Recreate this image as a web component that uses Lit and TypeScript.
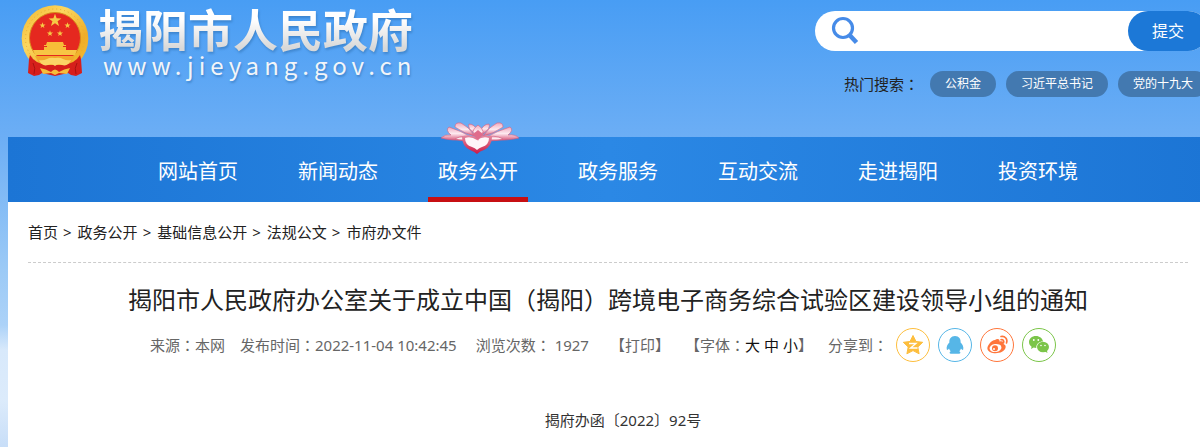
import { LitElement, html, css, svg } from "lit";
import { customElement } from "lit/decorators.js";

const STAR = "M0-10 2.4-3.2 9.5-3.1 3.8 1.2 5.9 8.1 0 4-5.9 8.1-3.8 1.2-9.5-3.1-2.4-3.2Z";

@customElement("site-emblem")
class SiteEmblem extends LitElement {
  static styles = css`
    :host { display: block; }
    svg { display: block; width: 68px; height: 72px; }
  `;
  render() {
    const star = (x: number, y: number, s: number) =>
      svg`<path d=${STAR} transform="translate(${x} ${y}) scale(${s})" fill="#f6c945"/>`;
    return html`<svg viewBox="0 0 68 72" role="img" aria-label="国徽">
      <defs><linearGradient id="gold" x1="0" y1="0" x2="1" y2="1">
        <stop offset="0" stop-color="#f3b52c"/><stop offset=".35" stop-color="#fbd760"/>
        <stop offset=".7" stop-color="#efad27"/><stop offset="1" stop-color="#f6c03c"/>
      </linearGradient></defs>
      <circle cx="34" cy="33.5" r="33.3" fill="url(#gold)"/>
      <circle cx="34" cy="33.5" r="29.5" fill="none" stroke="#e9ab30" stroke-width="1" stroke-dasharray="1 3"/>
      <circle cx="34" cy="33" r="25.5" fill="#e5281f" stroke="#d88d1c"/>
      ${star(34, 15.5, 0.68)}${star(21.5, 20.5, 0.32)}${star(46.5, 20.5, 0.32)}${star(29, 28.5, 0.32)}${star(39, 28.5, 0.32)}
      <path d="M26 37h16l1 3h2v1h-3v1h3v4H23v-4h3v-1h-3v-1h2Z" fill="#f7bd38"/>
      <path d="M12 45h44l-2 5H14Z" fill="#f7c544"/>
      <path d="M14 51h40l-4 7H18Z" fill="#f3a72c"/>
      <path d="M9 50q5 9 18 10h14q13-1 18-10l1 4 1 14-6 3-5-1-3-2-13 3-13-3-3 2-5 1-6-3 1-14Z" fill="#d61f1b"/>
      <path d="M18 55q4 1 8-1 3-2 8-1 5-1 8 1 4 2 8 1-3 7-9 5-4-2-7 1-3-3-7-1-6 2-9-5Z" fill="#fbd566"/>
      <path d="M19 63q6 1 11 4 4-5 8 0 5-3 11-4l-3 6-8-1-4 2-4-2-8 1Z" fill="#f6bd3a"/>
      <path d="M12 58q3 5 1 11M56 58q-3 5-1 11" fill="none" stroke="#a91210" stroke-width="1"/>
    </svg>`;
  }
}

@customElement("lotus-mark")
class LotusMark extends LitElement {
  static styles = css`
    :host { display: block; }
    svg { display: block; width: 78px; height: 32px; }
  `;
  render() {
    return html`<svg viewBox="0 0 78 32" aria-hidden="true">
      <defs>
        <linearGradient id="petal" x1="0" y1="0" x2="0" y2="1">
          <stop offset="0" stop-color="#f0a9bc"/><stop offset=".5" stop-color="#fdeaf0"/><stop offset="1" stop-color="#d9587b"/>
        </linearGradient>
        <linearGradient id="heart" x1="0" y1="0" x2="0" y2="1">
          <stop offset="0" stop-color="#e38aa2"/><stop offset="1" stop-color="#cc1844"/>
        </linearGradient>
      </defs>
      <g fill="url(#petal)" stroke="#d0607f" stroke-width=".6">
        <path d="M30 15Q20 9 8 5q-4 3 2 8Q4 12 0 16q10 3 28 2Z"/>
        <path d="M46 15Q56 9 69 5q4 3-2 8 7-1 11 3-12 3-29 2Z"/>
        <path d="M34 14Q24 12 14 5q0-5 6-4 8 4 13 12Z"/>
        <path d="M42 14q10-2 20-9 0-5-6-4-8 4-13 12Z"/>
        <path d="M34 12Q26 6 28 2q6 0 9 8ZM42 12q8-6 6-10-6 0-9 8Z"/>
        <path d="M37 3q-10 7 0 13 10-6 0-13Z"/>
        <path d="M14 17q8-5 21-1-8 5-21 1ZM62 17q-8-5-21-1 8 5 21 1Z"/>
      </g>
      <path d="M37 16q-10-5-16-1 0 9 8 13 5 2 7 4 3-3 7-4 8-4 8-13-6-4-14 1Z" fill="url(#heart)"/>
      <path d="M36 18q-6-4-12-2 0 7 7 9 3 1 5 3 2-2 5-3 7-2 7-9-6-2-12 2Z" fill="#fff5f8"/>
      <path d="M31 13q5 2 6 6 1-4 6-6l-6-5Z" fill="#e06c8b"/>
    </svg>`;
  }
}

const SHARES = [
  { name: "QQ空间", color: "#fdbe3d", art: svg`<path d="M17 7.500l3 6 6.700.8-4.900 4.700 1.300 6.800-6.100-3.200-6.100 3.200 1.300-6.800-4.900-4.700 6.700-.8Z" fill="#fdbe3d" stroke="#fdbe3d" stroke-linejoin="round"/><path d="M13 15.500h7l-5.500 4.500h7" fill="none" stroke="#fff" stroke-width="1.300"/>` },
  { name: "QQ", color: "#56b6e7", art: svg`<path d="M17 8c-4 0-6 3-5.600 6.500-2 2-3.300 4.500-2.600 7 .4 1 1.500 0 2.200-1 .3 1.200 1 2 1.700 2.700-1.600.6-1.500 2.600.3 2.600h8c1.800 0 1.900-2 .3-2.600.7-.7 1.400-1.500 1.700-2.700.7 1 1.800 2 2.200 1 .7-2.500-.6-5-2.600-7C23 11 21 8 17 8Z" fill="#56b6e7"/>` },
  { name: "新浪微博", color: "#ff763b", art: svg`<path d="M15 12c2-1.500 5-1.400 4.500 1.500 3-1 5 .2 4 2.500 4 1.500 2 6-1.500 7.800-5 2.600-13 1.700-14.500-2.500C6.500 18 11.500 12 15 12Z" fill="#ff763b"/><ellipse cx="15.500" cy="20" rx="6" ry="4" fill="#fff" transform="rotate(-8 15.500 20)"/><circle cx="15" cy="20.300" r="3" fill="#ff763b"/><circle cx="14" cy="21" r="1" fill="#fff"/><path d="M21 8.500c4-.8 7 2.500 5.500 6.500M21 11.700c2-.4 3.300 1 2.600 3" fill="none" stroke="#ff763b" stroke-width="1.600" stroke-linecap="round"/>` },
  { name: "微信", color: "#7bc549", art: svg`<path d="M14 8c-4.200 0-7 2.700-7 6 0 2 1 3.600 2.600 4.700L9 21l2.700-1.400c.8.200 1.600.4 2.600.4-.5-4 3-6.700 6.700-6.600C20.400 10.300 17.600 8 14 8Z" fill="#7bc549"/><ellipse cx="21" cy="19" rx="6" ry="5.200" fill="#7bc549"/><path d="M22 23l3.500 2-.8-3Z" fill="#7bc549"/><g fill="#fff"><circle cx="11.800" cy="12" r=".9"/><circle cx="16.300" cy="12" r=".9"/><circle cx="19" cy="17.500" r=".8"/><circle cx="23" cy="17.500" r=".8"/></g>` },
];

const NAV = ["网站首页", "新闻动态", "政务公开", "政务服务", "互动交流", "走进揭阳", "投资环境"];
const CRUMBS = ["首页", "政务公开", "基础信息公开", "法规公文", "市府办文件"];
const HOT = ["公积金", "习近平总书记", "党的十九大"];

// Full-width colon centred in its cell.
const colon = html`<span class="colon">：</span>`;

@customElement("app-root")
class AppRoot extends LitElement {
  static styles = css`
    * { box-sizing: border-box; }
    :host {
      display: block;
      min-height: 100vh;
      overflow: hidden;
      color: #222;
      font: 15px/20px "Noto Sans", "Noto Sans CJK SC", sans-serif;
      background: linear-gradient(#489df4 0, #6caef5 137px, #9ccaf6 270px, #acd2f8 325px, #d8e9fb 350px, #dcebfb 400px, #c8def8 447px);
    }
    a { color: inherit; text-decoration: none; }
    ul, ol { margin: 0; padding: 0; list-style: none; }
    .colon { font-family: "Noto Sans CJK TC", sans-serif; line-height: 1; }
    .page { margin: 0 -8px 0 8px; min-height: 100vh; display: flex; flex-direction: column; }
    header { display: flex; justify-content: space-between; height: 137px; }
    .brand { display: flex; gap: 9px; padding: 5px 0 0 13px; align-self: flex-start; }
    .name { font: bold 45px/48px "Noto Sans CJK SC", sans-serif; background: linear-gradient(#fff 30%, #d8d8d8 90%); background-clip: text; color: transparent; filter: drop-shadow(1px 2px 1px #2d6fb088); }
    .domain { padding-left: 5px; font: 24px/24px "Noto Sans CJK SC", sans-serif; letter-spacing: 5px; color: #f2f5f9; text-shadow: 1px 2px 2px #2d6fb088; }
    .tools { padding-top: 11px; width: 393px; }
    .search { display: flex; align-items: center; height: 40px; padding-left: 15px; border-radius: 20px; background: #fff; }
    .search svg { width: 30px; height: 30px; flex: none; }
    .search input { flex: 1; min-width: 0; border: 0; outline: 0; background: none; font: inherit; }
    .search button { width: 80px; height: 40px; border: 0; border-radius: 20px; background: #1c78d7; color: #fff; font: 16px/20px "Noto Sans", "Noto Sans CJK SC", sans-serif; }
    .hot { display: flex; justify-content: flex-end; align-items: center; gap: 11px; margin-top: 20px; }
    .hot ul { display: flex; gap: 10px; }
    .hot a { display: block; padding: 0 15px; border-radius: 13px; background: #4379b0; color: #fff; font-size: 12px; line-height: 26px; white-space: nowrap; }
    nav.main { background: linear-gradient(90deg, #1c75d5, #2b88e5 50%, #1c75d5); }
    nav.main ul { display: flex; justify-content: center; gap: 40px; padding-left: 20px; }
    nav.main li { position: relative; width: 100px; }
    nav.main li a { display: block; height: 65px; padding-top: 5px; color: #fff; font-size: 20px; line-height: 60px; text-align: center; }
    nav.main li a.active { border-bottom: 5px solid #c70f13; }
    lotus-mark { position: absolute; left: 13px; top: -15px; }
    main { flex: 1; padding: 0 20px 16px; background: #fff; }
    .crumbs { padding: 20px 0; border-bottom: 1px dashed #ccc; }
    .crumbs ol { display: flex; }
    .crumbs li + li::before { content: ">"; margin: 0 6px 0 5px; }
    h1 { margin: 17px 0 0; font-size: 24px; font-weight: 400; line-height: 40px; text-align: center; }
    .meta { display: flex; justify-content: center; align-items: center; gap: 15px; margin: 8px 10px 0 0; color: #666; white-space: nowrap; }
    .meta .date { padding-right: 4px; }
    .meta .print { margin-left: 6px; }
    .meta .sizes { display: inline-flex; gap: 4px; }
    .meta button { padding: 0; border: 0; background: none; font: inherit; color: inherit; }
    .meta .sizes button { color: #111; }
    .share { display: flex; align-items: center; gap: 8px; }
    .share a, .share svg { display: block; width: 34px; height: 34px; }
    .doc { margin: 48px 0 0; text-align: center; text-indent: 2em; color: #333; }
  `;
  render() {
    return html`<div class="page">
      <header>
        <a class="brand" href="#"><site-emblem></site-emblem>
          <div><div class="name">揭阳市人民政府</div><div class="domain">www.jieyang.gov.cn</div></div>
        </a>
        <div class="tools">
          <form class="search" role="search" @submit=${(e: Event) => e.preventDefault()}>
            <svg viewBox="0 0 30 30" aria-hidden="true"><g fill="none" stroke="#468be8"><circle cx="13" cy="12" r="9.5" stroke-width="3.2"/><path d="M20 19.500l6.500 7" stroke-width="4.5"/></g></svg>
            <input type="text" aria-label="搜索"><button>提交</button>
          </form>
          <div class="hot"><span>热门搜索${colon}</span><ul>${HOT.map((t) => html`<li><a href="#">${t}</a></li>`)}</ul></div>
        </div>
      </header>
      <nav class="main"><ul>${NAV.map((t, i) => html`<li><a href="#" class=${i === 2 ? "active" : ""}>${t}</a>${i === 2 ? html`<lotus-mark></lotus-mark>` : ""}</li>`)}</ul></nav>
      <main>
        <nav class="crumbs"><ol>${CRUMBS.map((t) => html`<li><a href="#">${t}</a></li>`)}</ol></nav>
        <h1>揭阳市人民政府办公室关于成立中国（揭阳）跨境电子商务综合试验区建设领导小组的通知</h1>
        <div class="meta">
          <span>来源${colon}本网</span><span class="date">发布时间${colon}2022-11-04 10:42:45</span><span>浏览次数${colon} 1927</span>
          <button class="print">【打印】</button>
          <span>【字体${colon}<span class="sizes"><button>大</button><button>中</button><button>小</button></span>】</span>
          <div class="share"><span>分享到${colon}</span>${SHARES.map((s) => html`<a href="#" aria-label=${s.name}><svg viewBox="0 0 34 34"><circle cx="17" cy="17" r="16.5" fill="#fff" stroke=${s.color}/>${s.art}</svg></a>`)}</div>
        </div>
        <p class="doc">揭府办函〔2022〕92号</p>
      </main>
    </div>`;
  }
}
